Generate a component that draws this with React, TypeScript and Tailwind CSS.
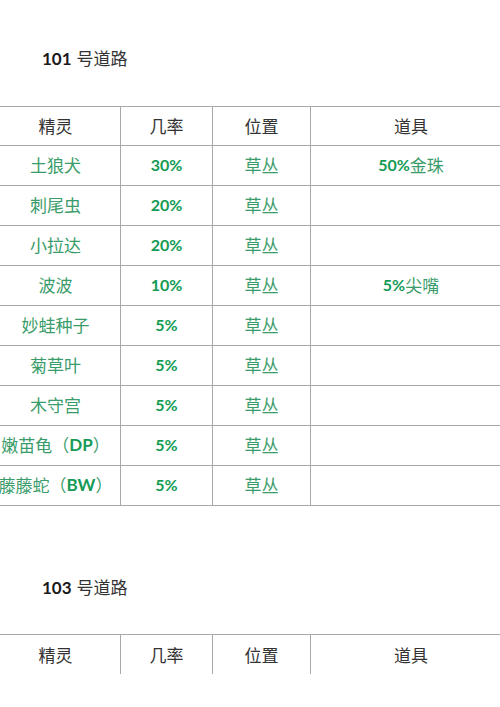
const cjk = "font-['Noto_Sans_CJK_SC',sans-serif]";
const num = "font-['Lato','Noto_Sans_CJK_SC',sans-serif] font-bold";

type Row = { name: string; tag?: string; rate: string; place: string; item?: { pct: string; name: string } };

const route101: Row[] = [
  { name: "土狼犬", rate: "30%", place: "草丛", item: { pct: "50%", name: "金珠" } },
  { name: "刺尾虫", rate: "20%", place: "草丛" },
  { name: "小拉达", rate: "20%", place: "草丛" },
  { name: "波波", rate: "10%", place: "草丛", item: { pct: "5%", name: "尖嘴" } },
  { name: "妙蛙种子", rate: "5%", place: "草丛" },
  { name: "菊草叶", rate: "5%", place: "草丛" },
  { name: "木守宫", rate: "5%", place: "草丛" },
  { name: "嫩苗龟", tag: "DP", rate: "5%", place: "草丛" },
  { name: "藤藤蛇", tag: "BW", rate: "5%", place: "草丛" },
];

function Title({ no }: { no: string }) {
  return (
    <div className="pl-[42px] flex items-baseline gap-[5px] text-[17px] text-[#1a1a1a]">
      <span className={num}>{no}</span>
      <span className={`${cjk} text-[#333]`}>号道路</span>
    </div>
  );
}

function Header({ last }: { last?: boolean }) {
  const cell = `${cjk} text-[17px] text-[#333] font-normal`;
  return (
    <div className={`grid grid-cols-[129px_92px_98px_201px] h-10 border-t border-[#a8a8a8] ${last ? "" : "border-b"}`}>
      <div className={`${cell} flex items-center justify-center`}>精灵</div>
      <div className={`${cell} flex items-center justify-center border-l border-[#a8a8a8]`}>几率</div>
      <div className={`${cell} flex items-center justify-center border-l border-[#a8a8a8]`}>位置</div>
      <div className={`${cell} flex items-center justify-center border-l border-[#a8a8a8]`}>道具</div>
    </div>
  );
}

export default function App() {
  return (
    <div className="w-[500px] h-[707px] bg-white overflow-hidden pt-[45px]">
      <Title no="101" />
      <div className="ml-[-9px] w-[520px] mt-[34px]">
        <Header />
        {route101.map((r) => (
          <div
            key={r.name}
            className="grid grid-cols-[129px_92px_98px_201px] h-10 border-b border-[#a8a8a8] text-[17px] text-[#3a9c6a]"
          >
            <div className={`${cjk} flex items-center justify-center whitespace-nowrap`}>
              {r.name}
              {r.tag && (
                <>
                  （<span className={`${num} text-[#139b55]`}>{r.tag}</span>）
                </>
              )}
            </div>
            <div className={`${num} text-[16px] text-[#139b55] flex items-center justify-center border-l border-[#a8a8a8]`}>
              {r.rate}
            </div>
            <div className={`${cjk} flex items-center justify-center border-l border-[#a8a8a8]`}>{r.place}</div>
            <div className={`${cjk} flex items-center justify-center border-l border-[#a8a8a8]`}>
              {r.item && (
                <>
                  <span className={`${num} text-[16px] text-[#139b55]`}>{r.item.pct}</span>
                  {r.item.name}
                </>
              )}
            </div>
          </div>
        ))}
      </div>
      <div className="mt-[68px]">
        <Title no="103" />
      </div>
      <div className="ml-[-9px] w-[520px] mt-[34px]">
        <Header last />
      </div>
    </div>
  );
}
